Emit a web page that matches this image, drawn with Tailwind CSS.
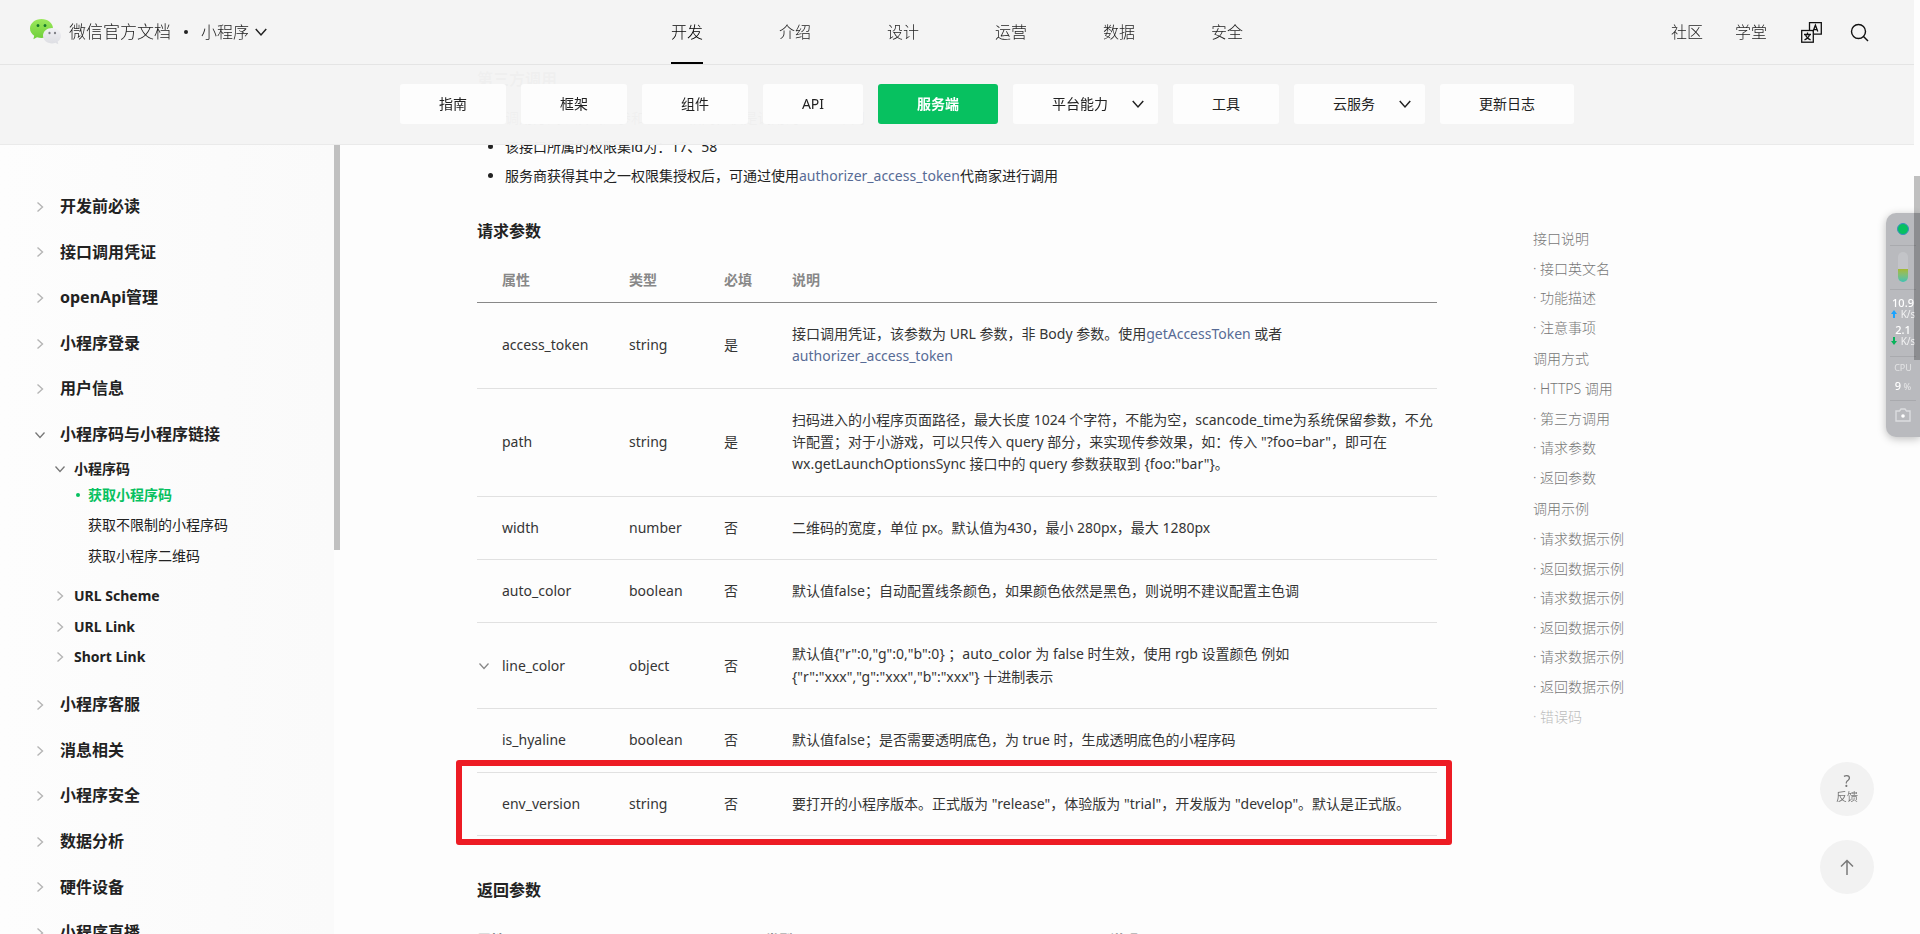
<!DOCTYPE html>
<html lang="zh-CN">
<head>
    <meta charset="UTF-8">
    <meta name="viewport" content="width=device-width, initial-scale=1.0">
    <title>获取小程序码 | 微信开放文档</title>
    <script src="https://cdn.jsdelivr.net/npm/@tailwindcss/browser@4"></script>
</head>

<body class="h-screen overflow-hidden bg-[#fdfdfd] font-['Noto_Sans','Noto_Sans_CJK_SC',sans-serif] text-sm text-[#222]">

  <!-- Shared icons -->
  <svg class="hidden">
    <symbol id="right" viewBox="0 0 12 12"><path d="M3.5 1.5 8.5 6l-5 4.5" fill="none" stroke="currentColor" stroke-width="1.4"/></symbol>
    <symbol id="down" viewBox="0 0 12 12"><path d="M1.5 3.5 6 8.5l4.5-5" fill="none" stroke="currentColor" stroke-width="1.3"/></symbol>
  </svg>

  <!-- Top bars -->
  <header class="fixed top-0 left-0 right-[6px] z-10">
    <div class="relative flex h-[65px] items-center justify-between border-b border-[#e4e4e4] bg-[#f4f4f4]/98 pl-[30px] pr-[45px] font-light">
      <div class="flex items-center">
        <a href="#" class="flex items-center gap-[7px] text-[17px]">
          <svg class="h-[26px] w-[32px]" viewBox="0 0 32 26">
            <defs>
              <linearGradient id="green" x1="0" y1="0" x2="0" y2="1"><stop offset="0" stop-color="#9be85c"/><stop offset="1" stop-color="#6fcf3a"/></linearGradient>
              <linearGradient id="grey" x1="0" y1="0" x2="0" y2="1"><stop offset="0" stop-color="#f1f1f5"/><stop offset="1" stop-color="#dcdde2"/></linearGradient>
            </defs>
            <path d="M11.500 0C5.100 0 0 4.200 0 9.500c0 3 1.600 5.500 4.200 7.300l-.8 3.400 3.600-1.900c1.400.5 2.900.7 4.500.7C17.900 19 23 14.800 23 9.500S17.900 0 11.500 0z" fill="url(#green)"/>
            <ellipse cx="8" cy="6.500" rx="1.400" ry="1.600" fill="#17792c"/><ellipse cx="15" cy="6.500" rx="1.400" ry="1.600" fill="#17792c"/>
            <path d="M22 9c-5 0-9 3.400-9 7.700s4 7.700 9 7.700c1.200 0 2.400-.2 3.400-.6l2.900 1.500-.6-2.700c2-1.400 3.300-3.500 3.300-5.900C31 12.400 27 9 22 9z" fill="url(#grey)"/>
            <ellipse cx="19.500" cy="14" rx="1.100" ry="1.300" fill="#7d7e84"/><ellipse cx="25" cy="14" rx="1.100" ry="1.300" fill="#7d7e84"/>
          </svg>
          微信官方文档
        </a>
        <span class="mx-[13px] size-[4px] rounded-full bg-[#222]"></span>
        <button class="flex items-center gap-[5px] text-base">小程序
          <svg class="size-[14px]"><use href="#down"/></svg>
        </button>
      </div>
      <nav class="absolute inset-x-0 top-0 mx-auto flex w-fit gap-[76px] text-base leading-[64px]">
        <a href="#" class="relative text-black">开发<span class="absolute inset-x-0 bottom-0 h-[2px] bg-black"></span></a>
        <a href="#">介绍</a>
        <a href="#">设计</a>
        <a href="#">运营</a>
        <a href="#">数据</a>
        <a href="#">安全</a>
      </nav>
      <div class="flex items-center gap-8 text-base">
        <a href="#">社区</a>
        <a href="#">学堂</a>
        <button aria-label="语言" class="ml-[2px]">
          <svg class="size-[21px]" viewBox="0 0 21 21" fill="none" stroke="#111" stroke-width="1.300">
            <path d="M8.500 8V.7h11.800v11.500H13"/>
            <rect x=".7" y="8.500" width="11.600" height="11.700"/>
            <path d="m12 9.500 2.400-6.300 2.400 6.300M12.800 7.600h3.200"/>
            <path d="M6.500 10.500v2M3 12.500h7M8.500 12.700c-.5 2.300-2.500 4.200-5 5.200M4.600 12.700c.5 2.300 2.500 4.200 5 5.200"/>
          </svg>
        </button>
        <button aria-label="搜索" class="-ml-1">
          <svg class="size-[19px]" viewBox="0 0 19 19" fill="none" stroke="#111" stroke-width="1.400"><circle cx="8.500" cy="8.500" r="7"/><path d="m13.500 13.500 4.500 4.500"/></svg>
        </button>
      </div>
    </div>
    <nav class="flex h-[80px] items-center justify-center gap-[15px] border-b border-[#eaeaea] bg-[#f4f4f4]/98 pb-[2px] pl-[60px] leading-[40px]">
      <a href="#" class="rounded-[3px] bg-[#fdfdfd] px-[39px]">指南</a>
      <a href="#" class="rounded-[3px] bg-[#fdfdfd] px-[39px]">框架</a>
      <a href="#" class="rounded-[3px] bg-[#fdfdfd] px-[39px]">组件</a>
      <a href="#" class="rounded-[3px] bg-[#fdfdfd] px-[39px]">API</a>
      <a href="#" class="rounded-[3px] bg-[#07c160] px-[39px] font-bold text-white">服务端</a>
      <button class="flex items-center gap-[23px] rounded-[3px] bg-[#fdfdfd] pl-[39px] pr-[13px]">平台能力
        <svg class="size-[14px]"><use href="#down"/></svg>
      </button>
      <a href="#" class="rounded-[3px] bg-[#fdfdfd] px-[39px]">工具</a>
      <button class="flex items-center gap-[23px] rounded-[3px] bg-[#fdfdfd] pl-[39px] pr-[13px]">云服务
        <svg class="size-[14px]"><use href="#down"/></svg>
      </button>
      <a href="#" class="rounded-[3px] bg-[#fdfdfd] px-[39px]">更新日志</a>
    </nav>
  </header>

  <div class="flex h-full">

    <!-- Side menu -->
    <aside class="relative w-[340px] shrink-0 overflow-hidden pt-[184px]">
      <div class="absolute inset-y-0 left-0 right-[6px] -z-10 bg-linear-to-r from-[#fdfdfd] to-[#fafafa]"></div>
      <div class="absolute right-0 top-[144px] h-[406px] w-[6px] bg-[#c0c0c0]"></div>
      <ul class="pl-[34px] text-base leading-[1.6] font-bold">
        <li class="flex items-center gap-[14px] py-[10px]"><svg class="size-[12px] text-[#b5b5b5]"><use href="#right"/></svg><a href="#">开发前必读</a></li>
        <li class="flex items-center gap-[14px] py-[10px]"><svg class="size-[12px] text-[#b5b5b5]"><use href="#right"/></svg><a href="#">接口调用凭证</a></li>
        <li class="flex items-center gap-[14px] py-[10px]"><svg class="size-[12px] text-[#b5b5b5]"><use href="#right"/></svg><a href="#">openApi管理</a></li>
        <li class="flex items-center gap-[14px] py-[10px]"><svg class="size-[12px] text-[#b5b5b5]"><use href="#right"/></svg><a href="#">小程序登录</a></li>
        <li class="flex items-center gap-[14px] py-[10px]"><svg class="size-[12px] text-[#b5b5b5]"><use href="#right"/></svg><a href="#">用户信息</a></li>
        <li class="flex items-center gap-[14px] py-[10px]"><svg class="size-[12px] text-[#777]"><use href="#down"/></svg><a href="#">小程序码与小程序链接</a></li>
        <li class="pb-[14px] pl-5 text-sm leading-[1.6]">
          <div class="flex items-center gap-2"><svg class="size-[12px] text-[#777]"><use href="#down"/></svg><a href="#">小程序码</a></div>
          <ul class="pt-1 pb-[10px] pl-[34px] font-normal">
            <li class="relative font-bold text-[#07c160]"><span class="absolute -left-3 top-[9px] size-[4px] rounded-full bg-[#07c160]"></span><a href="#">获取小程序码</a></li>
            <li class="pt-2"><a href="#">获取不限制的小程序码</a></li>
            <li class="pt-2"><a href="#">获取小程序二维码</a></li>
          </ul>
          <ul>
            <li class="flex items-center gap-2 pt-2"><svg class="size-[12px] text-[#b5b5b5]"><use href="#right"/></svg><a href="#">URL Scheme</a></li>
            <li class="flex items-center gap-2 pt-2"><svg class="size-[12px] text-[#b5b5b5]"><use href="#right"/></svg><a href="#">URL Link</a></li>
            <li class="flex items-center gap-2 pt-2"><svg class="size-[12px] text-[#b5b5b5]"><use href="#right"/></svg><a href="#">Short Link</a></li>
          </ul>
        </li>
        <li class="flex items-center gap-[14px] py-[10px]"><svg class="size-[12px] text-[#b5b5b5]"><use href="#right"/></svg><a href="#">小程序客服</a></li>
        <li class="flex items-center gap-[14px] py-[10px]"><svg class="size-[12px] text-[#b5b5b5]"><use href="#right"/></svg><a href="#">消息相关</a></li>
        <li class="flex items-center gap-[14px] py-[10px]"><svg class="size-[12px] text-[#b5b5b5]"><use href="#right"/></svg><a href="#">小程序安全</a></li>
        <li class="flex items-center gap-[14px] py-[10px]"><svg class="size-[12px] text-[#b5b5b5]"><use href="#right"/></svg><a href="#">数据分析</a></li>
        <li class="flex items-center gap-[14px] py-[10px]"><svg class="size-[12px] text-[#b5b5b5]"><use href="#right"/></svg><a href="#">硬件设备</a></li>
        <li class="flex items-center gap-[14px] py-[10px]"><svg class="size-[12px] text-[#b5b5b5]"><use href="#right"/></svg><a href="#">小程序直播</a></li>
      </ul>
    </aside>

    <!-- Article -->
    <main class="max-w-[1119px] min-w-0 flex-1 overflow-hidden pt-[67px] pr-[22px] pl-[137px]">
      <div class="leading-[1.6]">
        <h3 class="text-base leading-[1.6] font-bold">第三方调用</h3>
        <ul class="mt-[14px] list-disc space-y-[7px] pl-7">
          <li>调用方式以及出入参和HTTPS相同，仅是调用的token不同</li>
          <li>该接口所属的权限集id为：17、58</li>
          <li>服务商获得其中之一权限集授权后，可通过使用<a href="#" class="text-[#576b95]">authorizer_access_token</a>代商家进行调用</li>
        </ul>
        <h3 class="mt-[31px] text-base leading-[1.6] font-bold">请求参数</h3>
        <table class="mt-[15px] w-full table-fixed text-left text-[#353535]">
          <thead class="border-b border-[#888] text-[#888]">
            <tr>
              <th class="w-[152px] py-[10px] pl-[25px]">属性</th>
              <th class="w-[95px]">类型</th>
              <th class="w-[68px]">必填</th>
              <th>说明</th>
            </tr>
          </thead>
          <tbody class="whitespace-nowrap">
            <tr class="border-b border-[#e1e1e1]">
              <td class="py-5 pl-[25px]">access_token</td>
              <td>string</td>
              <td>是</td>
              <td class="py-5">接口调用凭证，该参数为 URL 参数，非 Body 参数。使用<a href="#" class="text-[#576b95]">getAccessToken</a> 或者<br><a href="#" class="text-[#576b95]">authorizer_access_token</a></td>
            </tr>
            <tr class="border-b border-[#e1e1e1]">
              <td class="py-5 pl-[25px]">path</td>
              <td>string</td>
              <td>是</td>
              <td class="py-5">扫码进入的小程序页面路径，最大长度 1024 个字符，不能为空，scancode_time为系统保留参数，不允<br>许配置；对于小游戏，可以只传入 query 部分，来实现传参效果，如：传入 "?foo=bar"，即可在<br>wx.getLaunchOptionsSync 接口中的 query 参数获取到 {foo:"bar"}。</td>
            </tr>
            <tr class="border-b border-[#e1e1e1]">
              <td class="py-5 pl-[25px]">width</td>
              <td>number</td>
              <td>否</td>
              <td>二维码的宽度，单位 px。默认值为430，最小 280px，最大 1280px</td>
            </tr>
            <tr class="border-b border-[#e1e1e1]">
              <td class="py-5 pl-[25px]">auto_color</td>
              <td>boolean</td>
              <td>否</td>
              <td>默认值false；自动配置线条颜色，如果颜色依然是黑色，则说明不建议配置主色调</td>
            </tr>
            <tr class="border-b border-[#e1e1e1]">
              <td><div class="flex items-center gap-[12px] pl-[1px]"><svg class="size-[12px] text-[#888]"><use href="#down"/></svg>line_color</div></td>
              <td>object</td>
              <td>否</td>
              <td class="py-5">默认值{"r":0,"g":0,"b":0} ；auto_color 为 false 时生效，使用 rgb 设置颜色 例如<br>{"r":"xxx","g":"xxx","b":"xxx"} 十进制表示</td>
            </tr>
            <tr class="border-b border-[#e1e1e1]">
              <td class="py-5 pl-[25px]">is_hyaline</td>
              <td>boolean</td>
              <td>否</td>
              <td>默认值false；是否需要透明底色，为 true 时，生成透明底色的小程序码</td>
            </tr>
            <tr class="relative border-b border-[#e1e1e1]">
              <td class="py-5 pl-[25px]">env_version<span class="absolute -top-3 -right-[15px] -bottom-[10px] -left-[21px] rounded-[3px] border-6 border-[#ed1c24]"></span></td>
              <td>string</td>
              <td>否</td>
              <td>要打开的小程序版本。正式版为 "release"，体验版为 "trial"，开发版为 "develop"。默认是正式版。</td>
            </tr>
          </tbody>
        </table>
        <h3 class="mt-[42px] text-base leading-[1.6] font-bold">返回参数</h3>
        <table class="mt-[15px] w-full table-fixed text-left">
          <thead class="border-b border-[#888] text-[#888]">
            <tr>
              <th class="w-[288px] py-[10px]">属性</th>
              <th class="w-[345px]">类型</th>
              <th>说明</th>
            </tr>
          </thead>
        </table>
      </div>
    </main>

    <!-- Table of contents -->
    <nav class="ml-[74px] shrink-0 pt-[226px] font-light text-[#777]">
      <ul class="space-y-[3px] leading-[1.9]">
        <li><a href="#">接口说明</a></li>
        <li><a href="#">· 接口英文名</a></li>
        <li><a href="#">· 功能描述</a></li>
        <li><a href="#">· 注意事项</a></li>
        <li class="pt-[2px]"><a href="#">调用方式</a></li>
        <li><a href="#">· HTTPS 调用</a></li>
        <li><a href="#">· 第三方调用</a></li>
        <li><a href="#">· 请求参数</a></li>
        <li><a href="#">· 返回参数</a></li>
        <li class="pt-[2px]"><a href="#">调用示例</a></li>
        <li><a href="#">· 请求数据示例</a></li>
        <li><a href="#">· 返回数据示例</a></li>
        <li><a href="#">· 请求数据示例</a></li>
        <li><a href="#">· 返回数据示例</a></li>
        <li><a href="#">· 请求数据示例</a></li>
        <li><a href="#">· 返回数据示例</a></li>
        <li class="opacity-50"><a href="#">· 错误码</a></li>
      </ul>
    </nav>
  </div>

  <!-- Floating buttons -->
  <div class="fixed right-[46px] bottom-[40px] flex flex-col gap-6 text-[#777]">
    <button class="flex size-[54px] flex-col items-center justify-center rounded-full bg-[#f2f2f2] text-[11px] leading-[16px]"><span class="text-base leading-[16px]">?</span>反馈</button>
    <button aria-label="回到顶部" class="flex size-[54px] items-center justify-center rounded-full bg-[#f2f2f2]">
      <svg class="size-[16px]" viewBox="0 0 16 16" fill="none" stroke="#7a7a7a" stroke-width="1.500"><path d="M8 16V1.500M2 7.500l6-6 6 6"/></svg>
    </button>
  </div>

  <!-- Monitor widget -->
  <div class="fixed top-[213px] right-0 z-20 flex w-[34px] flex-col items-center overflow-hidden rounded-l-[10px] bg-[#b9babe] text-white shadow-[0_2px_8px_rgba(0,0,0,0.25)]">
    <span class="mt-[10px] size-[12px] rounded-full border border-[#3a8fc0] bg-[#07c160]"></span>
    <span class="mt-[10px] w-[26px] border-t border-[#a9aaae]"></span>
    <span class="mt-[6px] flex h-[30px] w-[10px] flex-col justify-end overflow-hidden rounded-full bg-[#c3c4c8]"><span class="h-[13px] bg-linear-to-b from-[#a5b92e] to-[#3cc2b0]"></span></span>
    <span class="mt-[7px] w-[26px] border-t border-[#a9aaae]"></span>
    <div class="mt-[7px] text-[11px] leading-[12px] font-medium">10.9</div>
    <div class="flex items-center gap-1 whitespace-nowrap text-[10px] leading-[10px] text-white/80"><svg class="h-[8px] w-[6px] fill-[#1aa3ff]" viewBox="0 0 6 8"><path d="m3 0 3 4H4v4H2V4H0z"/></svg>K/s</div>
    <div class="mt-[5px] text-[11px] leading-[12px] font-medium">2.1</div>
    <div class="flex items-center gap-1 whitespace-nowrap text-[10px] leading-[10px] text-white/80"><svg class="h-[8px] w-[6px] fill-[#07b35a]" viewBox="0 0 6 8"><path d="m3 8 3-4H4V0H2v4H0z"/></svg>K/s</div>
    <span class="mt-[10px] w-[26px] border-t border-[#a9aaae]"></span>
    <div class="mt-[5px] text-[9px] leading-[12px] text-white/60">CPU</div>
    <div class="mt-[6px] text-[11px] leading-[12px] font-medium">9<span class="text-[9px] text-white/60"> %</span></div>
    <span class="mt-[7px] w-[26px] border-t border-[#a9aaae]"></span>
    <svg class="mt-[7px] mb-[15px] h-[14px] w-[16px]" viewBox="0 0 16 14" fill="none" stroke="#dcdde0" stroke-width="1.400"><path d="M1 3h3.500L6 1h4l1.500 2H15v10H1z"/><circle cx="8" cy="8" r="1.800" fill="#fff" stroke="none"/></svg>
  </div>
  <div class="fixed top-[176px] right-0 z-30 h-[184px] w-[6px] bg-black/24"></div>

</body>
</html>
